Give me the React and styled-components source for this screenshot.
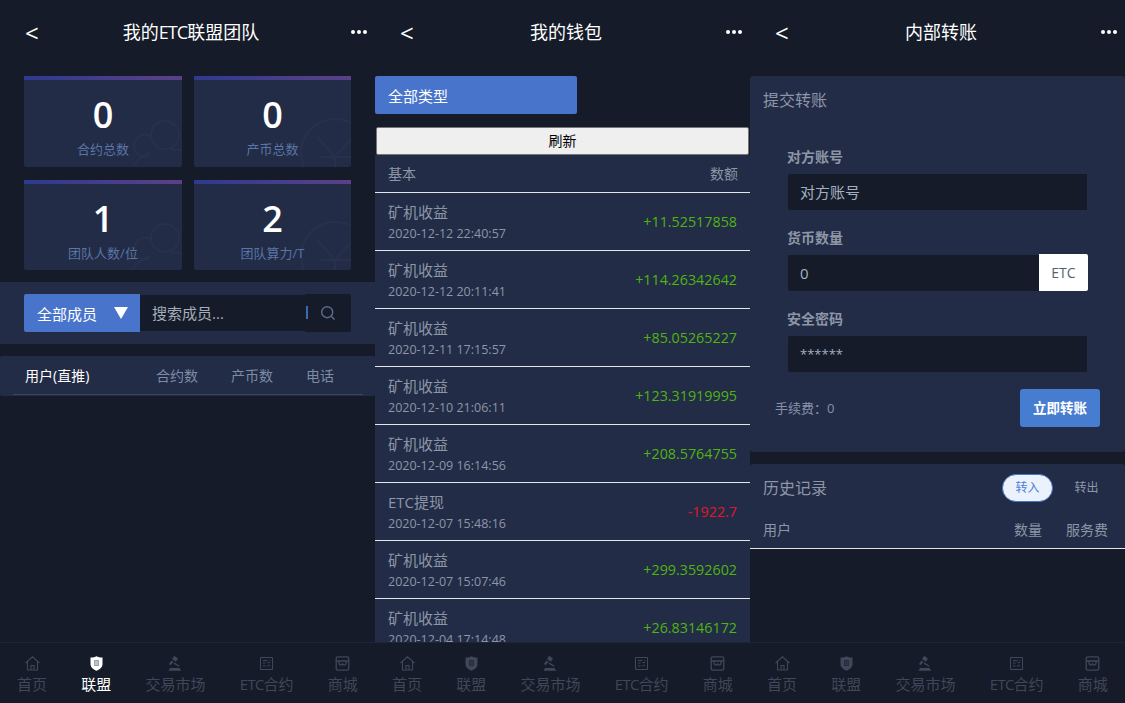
import React from 'react'
import styled, { createGlobalStyle } from 'styled-components'

const GlobalStyle = createGlobalStyle`
    html, body { margin:0; padding:0; background:#151b28; }
    body { font-family:"Open Sans","Noto Sans CJK SC",sans-serif; overflow:hidden; }
    * { box-sizing:border-box; }
`

const Screens = styled.div`
    display:grid;
    grid-template-columns:repeat(3,375px);
    width:1125px;
    height:703px;
    overflow:hidden;
`
const Phone = styled.div`
    display:flex;
    flex-direction:column;
    height:703px;
    background:#151b28;
    overflow:hidden;
`
const Content = styled.div`
    flex:1;
    min-height:0;
    overflow:hidden;
`
const Header = styled.header`
    flex:none;
    display:flex;
    align-items:center;
    justify-content:space-between;
    height:64px;
    padding:0 8px 0 25px;
    color:#fff;
`
const Back = styled.span`
    width:30px;
    font-size:24px;
    line-height:1;
    margin-top:2px;
`
const Title = styled.h1`
    margin:0;
    font-size:18px;
    font-weight:400;
    line-height:1;
`
const Tight = styled.span`
    letter-spacing:-.05em;
`
const More = styled.svg`
    width:40px;
    height:6px;
    fill:#fff;
`

const CardGrid = styled.div`
    display:grid;
    grid-template-columns:158px 157px;
    grid-template-rows:91px 90px;
    gap:13px 12px;
    padding:12px 24px;
`
const StatCard = styled.div`
    position:relative;
    overflow:hidden;
    display:flex;
    flex-direction:column;
    align-items:center;
    background:#222c47;
    border-radius:2px;
    border-top:4px solid;
    border-image:linear-gradient(90deg,#2e3a8e,#5c4088) 1;
`
const StatValue = styled.div`
    position:relative;
    margin-top:13px;
    font-size:36px;
    font-weight:600;
    line-height:44px;
    color:#fff;
`
const StatLabel = styled.div`
    position:relative;
    font-size:13px;
    line-height:20px;
    margin-top:2px;
    color:#5a75a6;
`
const Watermark = styled.svg`
    position:absolute;
    right:0;
    bottom:0;
    width:60px;
    height:60px;
    fill:none;
    stroke:#27314d;
    stroke-width:2;
`

const FilterBar = styled.div`
    display:flex;
    height:62px;
    padding:12px 24px;
    background:#222c47;
`
const SelectBox = styled.div`
    display:flex;
    align-items:center;
    justify-content:space-between;
    width:${p => p.$wide ? '202px' : '116px'};
    height:38px;
    padding:0 12px 0 13px;
    background:#4874cb;
    border-radius:${p => p.$wide ? '2px' : '2px 0 0 2px'};
    color:#fff;
    font-size:15px;
`
const Caret = styled.span`
    width:0;
    height:0;
    border-left:7px solid transparent;
    border-right:7px solid transparent;
    border-top:12px solid #fff;
`
const SearchInput = styled.div`
    display:flex;
    align-items:center;
    width:165px;
    height:36px;
    margin-top:1px;
    padding:0 12px 1px;
    background:#151b28;
    color:#a5adba;
    font-size:15px;
`
const SearchBtn = styled.div`
    position:relative;
    display:flex;
    align-items:center;
    justify-content:center;
    width:46px;
    height:38px;
    background:#151b28;
    border-radius:0 2px 2px 0;
    color:#5a6c8e;
    &::before{
        content:"";
        position:absolute;
        left:1px;
        top:12px;
        width:2px;
        height:13px;
        background:#3f6aa8;
    }
`

const MemberHead = styled.div`
    margin-top:12px;
    height:40px;
    padding:0 12px 0 13px;
    background:#222c47;
    border-radius:2px;
`
const MemberRow = styled.div`
    display:flex;
    align-items:center;
    height:39px;
    border-bottom:1px solid #3a4463;
    font-size:14px;
    color:#7d8ba3;
`
const MemberCell = styled.span`
    width:${p => p.$w}px;
    padding-left:${p => p.$pl || 0}px;
    color:${p => p.$active ? '#fff' : 'inherit'};
    flex:none;
`

const SelectWrap = styled.div`
    padding:12px 0 13px;
`
const RefreshBtn = styled.button`
    display:block;
    width:373px;
    height:28px;
    margin-left:1px;
    padding:0 0 2px;
    background:#efefef;
    border:1px solid #767676;
    border-radius:2px;
    color:#000;
    font-family:inherit;
    font-size:14px;
`
const TableHead = styled.div`
    display:flex;
    align-items:center;
    justify-content:space-between;
    height:38px;
    padding:${p => p.$flat ? '0 17px 2px 13px' : '0 12px 2px 13px'};
    background:#222c47;
    border-bottom:1px solid #e4e6ea;
    font-size:14px;
    color:#8d96a6;
`
const RecordRow = styled.div`
    display:flex;
    align-items:center;
    justify-content:space-between;
    height:58px;
    padding:0 13px;
    background:#222c47;
    border-bottom:1px solid #e4e6ea;
`
const RecordInfo = styled.div`
    display:flex;
    flex-direction:column;
    gap:2px;
    padding-top:2px;
`
const RecordName = styled.span`
    font-size:15px;
    line-height:20px;
    color:#8d96a6;
`
const RecordTime = styled.span`
    font-size:12.5px;
    line-height:19px;
    color:#8d96a6;
`
const Amount = styled.span`
    font-size:14.3px;
    color:${p => p.$neg ? '#e0162b' : '#4fb40f'};
`

const Panel = styled.section`
    background:#222c47;
    border-radius:3px;
`
const TransferPanel = styled(Panel)`
    margin-top:12px;
    height:376px;
    padding:13px 25px 0 13px;
`
const PanelTitle = styled.div`
    font-size:16px;
    line-height:22px;
    color:#8d96a6;
`
const Form = styled.div`
    padding:36px 12px 0 24px;
`
const Field = styled.div`
    margin-bottom:18px;
`
const FieldLabel = styled.div`
    margin-bottom:7px;
    font-size:14px;
    line-height:20px;
    font-weight:700;
    color:#8d96a6;
`
const InputRow = styled.div`
    display:flex;
    width:${p => p.$w || 299}px;
    margin-left:1px;
`
const InputBox = styled.div`
    flex:1;
    height:36px;
    padding:0 12px;
    background:#151b28;
    border-radius:2px 0 0 2px;
    font-size:${p => p.$small ? '13px' : '15px'};
    line-height:36px;
    color:#a3b0c2;
`
const Addon = styled.div`
    width:49px;
    height:37px;
    margin-top:-1px;
    background:#fff;
    border-radius:0 2px 2px 0;
    color:#555f70;
    font-size:14px;
    line-height:38px;
    text-align:center;
`
const FeeRow = styled.div`
    display:flex;
    align-items:center;
    justify-content:space-between;
    margin-top:-1px;
    padding-left:12px;
`
const Fee = styled.span`
    padding-bottom:1px;
    font-size:13px;
    color:#8793a8;
`
const SubmitBtn = styled.div`
    width:80px;
    height:38px;
    background:#477dd1;
    border-radius:3px;
    color:#fff;
    font-size:13.5px;
    font-weight:700;
    line-height:38px;
    text-align:center;
`
const HistoryPanel = styled(Panel)`
    margin-top:12px;
`
const HistoryTop = styled.div`
    display:flex;
    align-items:center;
    justify-content:space-between;
    height:47px;
    padding:0 13px;
`
const Tabs = styled.div`
    display:flex;
    align-items:center;
    gap:8px;
`
const Tab = styled.span`
    width:51px;
    height:28px;
    border:${p => p.$active ? '1px solid #4874cb' : '1px solid transparent'};
    border-radius:14px;
    background:${p => p.$active ? '#ecf2fc' : 'transparent'};
    color:${p => p.$active ? '#4d80d6' : '#8d96a6'};
    font-size:12px;
    line-height:26px;
    text-align:center;
`
const HeadGroup = styled.div`
    display:flex;
    gap:24px;
`

const TabBar = styled.nav`
    flex:none;
    display:flex;
    justify-content:space-around;
    height:61px;
    padding-top:12px;
    background:#151b28;
    border-top:1px solid #1e2534;
`
const TabItem = styled.div`
    display:flex;
    flex-direction:column;
    align-items:center;
    gap:2px;
    color:${p => p.$active ? '#fff' : '#3f4759'};
    font-size:15px;
    line-height:20px;
    svg{ display:block; width:17px; height:17px; }
`

const HomeIcon = () => (
    <svg viewBox="0 0 17 17" fill="none" stroke="currentColor" strokeWidth="1.1">
        <path d="M1.500 8 8.500 1.800 15.500 8M3.500 6.500V15h10V6.500M7 15v-4.500h3V15" />
    </svg>
)
const ShieldIcon = ({ active }) => (
    <svg viewBox="0 0 17 17">
        <path d="M2.500 2.500C5 2.500 7 2 8.500 1.200 10 2 12 2.500 14.500 2.500V9c0 3.200-2.600 5.400-6 6.800-3.400-1.400-6-3.600-6-6.800Z" fill={active ? '#fff' : '#3f4759'} />
        <path d="M6 5h5v6H6Z" fill={active ? '#9aa3ad' : '#262d3d'} />
        <path d="M6.800 7h3.400M6.800 9h3.400" stroke={active ? '#fff' : '#3f4759'} strokeWidth=".7" />
    </svg>
)
const GavelIcon = () => (
    <svg viewBox="0 0 17 17" fill="currentColor">
        <path d="M7.200.8 11 3.600 8.800 6.700 5 3.900ZM7.600 7.400l4.900 3.400-.7 1-5.200-3ZM4.500 5.500 6.500 7 3.400 10.300 2 9.100ZM3 13h9.500l1.800 2.800H1.500Z" />
    </svg>
)
const ContractIcon = () => (
    <svg viewBox="0 0 17 17" fill="none" stroke="currentColor" strokeWidth="1">
        <path d="M2.500 2.500h12v12h-12ZM5 5.500h4.500M5 8h2.500M5 11h2.500M9 11.500l1.500-1.500 1.500 1M9.500 7.500h2.500M11.500 5.500h1" />
    </svg>
)
const StoreIcon = () => (
    <svg viewBox="0 0 17 17" fill="none" stroke="currentColor" strokeWidth="1.300">
        <path d="M4 1.800h9A1.800 1.800 0 0 1 14.800 3.600V13.400A1.800 1.800 0 0 1 13 15.200H4A1.800 1.800 0 0 1 2.200 13.400V3.600A1.800 1.800 0 0 1 4 1.800ZM2.200 6h12.600M5 6.500v1.800a1.700 1.700 0 0 0 3.500 0 1.700 1.700 0 0 0 3.500 0V6.500" />
    </svg>
)

const navItems = [
    { id: 'home', label: '首页', Icon: HomeIcon },
    { id: 'league', label: '联盟', Icon: ShieldIcon },
    { id: 'market', label: '交易市场', Icon: GavelIcon },
    { id: 'etc', label: <><Tight>ETC</Tight>合约</>, Icon: ContractIcon },
    { id: 'shop', label: '商城', Icon: StoreIcon },
]

const BottomNav = ({ active }) => (
    <TabBar>
        {navItems.map(({ id, label, Icon }) => (
            <TabItem key={id} $active={id === active}>
                <Icon active={id === active} />
                <span>{label}</span>
            </TabItem>
        ))}
    </TabBar>
)

const TopBar = ({ children }) => (
    <Header>
        <Back>&lt;</Back>
        <Title>{children}</Title>
        <More viewBox="0 0 40 6">
            <circle cx="26" cy="3" r="2" />
            <circle cx="32" cy="3" r="2" />
            <circle cx="38" cy="3" r="2" />
        </More>
    </Header>
)

const PeopleMark = () => (
    <Watermark viewBox="0 0 60 60">
        <circle cx="43" cy="28" r="14" />
        <path d="M30 30A11 11 0 1 0 27 49" />
        <path d="M10 62c3-8 10-13 18-16M60 44c-4-1-8-2-12-2" />
    </Watermark>
)
const CoinMark = () => (
    <Watermark viewBox="0 0 60 60">
        <circle cx="44" cy="46" r="34" />
        <path d="M26 30 44 50 60 32M44 50v10M30 50h30" />
    </Watermark>
)

const stats = [
    { value: 0, label: '合约总数', Mark: PeopleMark },
    { value: 0, label: '产币总数', Mark: CoinMark },
    { value: 1, label: '团队人数/位', Mark: PeopleMark },
    { value: 2, label: '团队算力/T', Mark: CoinMark },
]

const records = [
    ['矿机收益', '2020-12-12 22:40:57', '+11.52517858'],
    ['矿机收益', '2020-12-12 20:11:41', '+114.26342642'],
    ['矿机收益', '2020-12-11 17:15:57', '+85.05265227'],
    ['矿机收益', '2020-12-10 21:06:11', '+123.31919995'],
    ['矿机收益', '2020-12-09 16:14:56', '+208.5764755'],
    ['ETC提现', '2020-12-07 15:48:16', '-1922.7'],
    ['矿机收益', '2020-12-07 15:07:46', '+299.3592602'],
    ['矿机收益', '2020-12-04 17:14:48', '+26.83146172'],
]

const SearchIcon = () => (
    <svg width="16" height="16" viewBox="0 0 16 16" fill="none" stroke="currentColor" strokeWidth="1.400">
        <circle cx="7.200" cy="7.200" r="5.500" />
        <path d="m11.200 11.200 3.300 3.300" />
    </svg>
)

export default function App() {
    return (
        <>
            <GlobalStyle />
            <Screens>
                <Phone>
                    <TopBar>我的<Tight>ETC</Tight>联盟团队</TopBar>
                    <Content>
                        <CardGrid>
                            {stats.map(({ value, label, Mark }) => (
                                <StatCard key={label}>
                                    <Mark />
                                    <StatValue>{value}</StatValue>
                                    <StatLabel>{label}</StatLabel>
                                </StatCard>
                            ))}
                        </CardGrid>
                        <FilterBar>
                            <SelectBox>全部成员<Caret /></SelectBox>
                            <SearchInput>搜索成员...</SearchInput>
                            <SearchBtn><SearchIcon /></SearchBtn>
                        </FilterBar>
                        <MemberHead>
                            <MemberRow>
                                <MemberCell $w={143} $pl={12} $active>用户(直推)</MemberCell>
                                <MemberCell $w={75}>合约数</MemberCell>
                                <MemberCell $w={75}>产币数</MemberCell>
                                <MemberCell $w={40}>电话</MemberCell>
                            </MemberRow>
                        </MemberHead>
                    </Content>
                    <BottomNav active="league" />
                </Phone>

                <Phone>
                    <TopBar>我的钱包</TopBar>
                    <Content>
                        <SelectWrap>
                            <SelectBox $wide>全部类型</SelectBox>
                        </SelectWrap>
                        <RefreshBtn>刷新</RefreshBtn>
                        <TableHead>
                            <span>基本</span>
                            <span>数额</span>
                        </TableHead>
                        {records.map(([name, time, amount]) => (
                            <RecordRow key={time}>
                                <RecordInfo>
                                    <RecordName>{name}</RecordName>
                                    <RecordTime>{time}</RecordTime>
                                </RecordInfo>
                                <Amount $neg={amount.startsWith('-')}>{amount}</Amount>
                            </RecordRow>
                        ))}
                    </Content>
                    <BottomNav />
                </Phone>

                <Phone>
                    <TopBar>内部转账</TopBar>
                    <Content>
                        <TransferPanel>
                            <PanelTitle>提交转账</PanelTitle>
                            <Form>
                                <Field>
                                    <FieldLabel>对方账号</FieldLabel>
                                    <InputRow><InputBox>对方账号</InputBox></InputRow>
                                </Field>
                                <Field>
                                    <FieldLabel>货币数量</FieldLabel>
                                    <InputRow $w={300}><InputBox>0</InputBox><Addon>ETC</Addon></InputRow>
                                </Field>
                                <Field>
                                    <FieldLabel>安全密码</FieldLabel>
                                    <InputRow><InputBox $small>******</InputBox></InputRow>
                                </Field>
                            </Form>
                            <FeeRow>
                                <Fee>手续费：0</Fee>
                                <SubmitBtn>立即转账</SubmitBtn>
                            </FeeRow>
                        </TransferPanel>
                        <HistoryPanel>
                            <HistoryTop>
                                <PanelTitle>历史记录</PanelTitle>
                                <Tabs>
                                    <Tab $active>转入</Tab>
                                    <Tab>转出</Tab>
                                </Tabs>
                            </HistoryTop>
                            <TableHead $flat>
                                <span>用户</span>
                                <HeadGroup>
                                    <span>数量</span>
                                    <span>服务费</span>
                                </HeadGroup>
                            </TableHead>
                        </HistoryPanel>
                    </Content>
                    <BottomNav />
                </Phone>
            </Screens>
        </>
    )
}
